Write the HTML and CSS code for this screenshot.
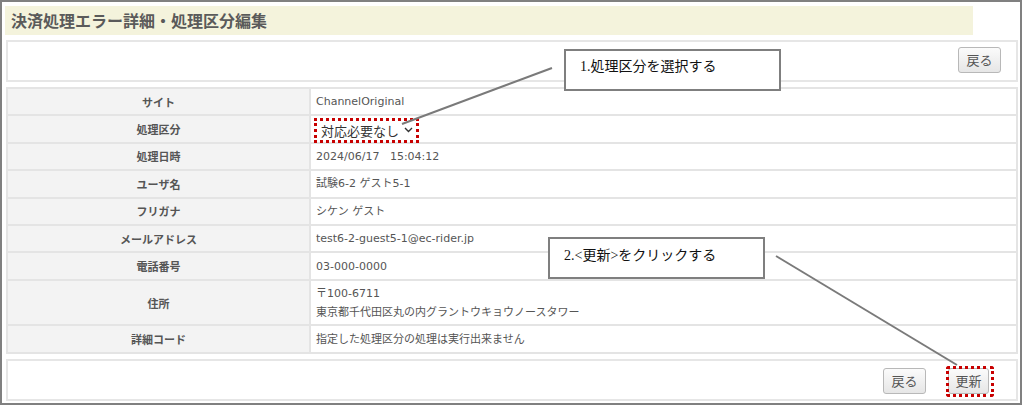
FILE: index.html
```html
<!DOCTYPE html>
<html lang="ja">
<head>
<meta charset="utf-8">
<title>決済処理エラー詳細・処理区分編集</title>
<link rel="stylesheet" href="styles.css">
</head>
<body>
<div class="frame">
  <h1 class="title">決済処理エラー詳細・処理区分編集</h1>
  <div class="panel panel-top">
    <button class="btn" type="button">戻る</button>
  </div>
  <table class="detail">
    <tbody>
      <tr><th>サイト</th><td>ChannelOriginal</td></tr>
      <tr><th>処理区分</th><td><span class="select-hl"><span class="select">対応必要なし<svg class="chev" width="9" height="6" viewBox="0 0 9 6"><path d="M1 1 L4.5 4.5 L8 1" fill="none" stroke="#333" stroke-width="1.4"/></svg></span></span></td></tr>
      <tr><th>処理日時</th><td>2024/06/17&nbsp;&nbsp;&nbsp;15:04:12</td></tr>
      <tr><th>ユーザ名</th><td>試験6-2 ゲスト5-1</td></tr>
      <tr><th>フリガナ</th><td>シケン ゲスト</td></tr>
      <tr><th>メールアドレス</th><td>test6-2-guest5-1@ec-rider.jp</td></tr>
      <tr><th>電話番号</th><td>03-000-0000</td></tr>
      <tr class="tall"><th>住所</th><td>〒100-6711<br>東京都千代田区丸の内グラントウキョウノースタワー</td></tr>
      <tr><th>詳細コード</th><td>指定した処理区分の処理は実行出来ません</td></tr>
    </tbody>
  </table>
  <div class="panel panel-bottom">
    <button class="btn" type="button">戻る</button>
    <button class="btn btn-update" type="button">更新</button>
  </div>

  <svg class="arrows" width="1024" height="406" viewBox="0 0 1024 406">
    <line x1="552" y1="68" x2="402" y2="124" stroke="#7a7a7a" stroke-width="2"/>
    <line x1="776" y1="256" x2="957" y2="365" stroke="#7a7a7a" stroke-width="2"/>
  </svg>
  <div class="callout callout-1">1.処理区分を選択する</div>
  <div class="callout callout-2">2.&lt;更新&gt;をクリックする</div>
  <div class="hl-update"></div>
</div>
</body>
</html>
```

FILE: styles.css
```css
html, body {
  margin: 0;
  padding: 0;
  background: #ffffff;
}

.frame {
  position: relative;
  width: 1022px;
  height: 405px;
  box-sizing: border-box;
  border: 2px solid #808080;
  padding: 4px 2px 0 3px;
  font-family: "Noto Sans CJK JP", "Noto Sans", sans-serif;
  color: #555555;
}

.title {
  margin: 0;
  width: 968px;
  height: 29px;
  box-sizing: border-box;
  padding-left: 6px;
  background: #f4f3dc;
  font-size: 16px;
  font-weight: bold;
  line-height: 29px;
  color: #5a5a5a;
}

.panel {
  margin: 5px 0 0 1px;
  width: 1012px;
  height: 42px;
  box-sizing: border-box;
  border: 2px solid #e6e6e6;
  display: flex;
  justify-content: flex-end;
  align-items: flex-start;
}

.panel-top {
  padding: 5px 15px 0 0;
}

.panel-bottom {
  padding: 7px 27px 0 0;
  gap: 22px;
}

.btn {
  width: 43px;
  height: 26px;
  box-sizing: border-box;
  padding: 0;
  border: 1px solid #b8b8b8;
  border-radius: 3px;
  background: linear-gradient(#fbfbfb, #e6e6e6);
  font-family: "Noto Sans CJK JP", sans-serif;
  font-size: 13px;
  color: #555555;
  line-height: 22px;
}

.btn-update {
  width: 41px;
}

.detail {
  margin: 5px 0 0 1px;
  width: 1012px;
  border-collapse: collapse;
  font-size: 11px;
}

.detail th,
.detail td {
  border: 2px solid #e4e4e4;
  height: 25.4px;
  padding: 0;
}

.detail th {
  width: 301px;
  background: #f3f3f3;
  font-weight: bold;
  text-align: center;
  color: #555555;
}

.detail td {
  padding-left: 5px;
  text-align: left;
  font-family: "DejaVu Sans", "Noto Sans CJK JP", sans-serif;
  font-weight: normal;
  color: #555555;
  line-height: 19px;
}

.detail tr.tall th,
.detail tr.tall td {
  height: 43.7px;
}

.select-hl {
  display: inline-flex;
  align-items: center;
  width: 105px;
  height: 25px;
  box-sizing: border-box;
  border: 3px dotted #c80000;
  margin-left: -2px;
  padding: 0 0 0 4px;
  vertical-align: middle;
  position: relative;
  top: 1px;
}

.select {
  display: inline-flex;
  align-items: center;
  gap: 5px;
  font-family: "Noto Sans CJK JP", sans-serif;
  font-size: 13px;
  line-height: 15px;
  color: #333333;
}

.chev {
  display: block;
}

.arrows {
  position: absolute;
  left: -2px;
  top: -2px;
  pointer-events: none;
}

.callout {
  position: absolute;
  box-sizing: border-box;
  height: 42px;
  border: 2px solid #7f7f7f;
  background: #ffffff;
  font-family: "Liberation Serif", "Noto Sans CJK JP", serif;
  font-size: 14px;
  color: #111111;
  line-height: 16px;
}

.callout-1 {
  left: 562px;
  top: 47px;
  width: 217px;
  padding: 8px 0 0 14px;
}

.callout-2 {
  left: 546px;
  top: 235px;
  width: 217px;
  padding: 9px 0 0 14px;
}

.hl-update {
  position: absolute;
  left: 944px;
  top: 364px;
  width: 48px;
  height: 31px;
  box-sizing: border-box;
  border: 3px dotted #c80000;
  border-radius: 3px;
}
```
